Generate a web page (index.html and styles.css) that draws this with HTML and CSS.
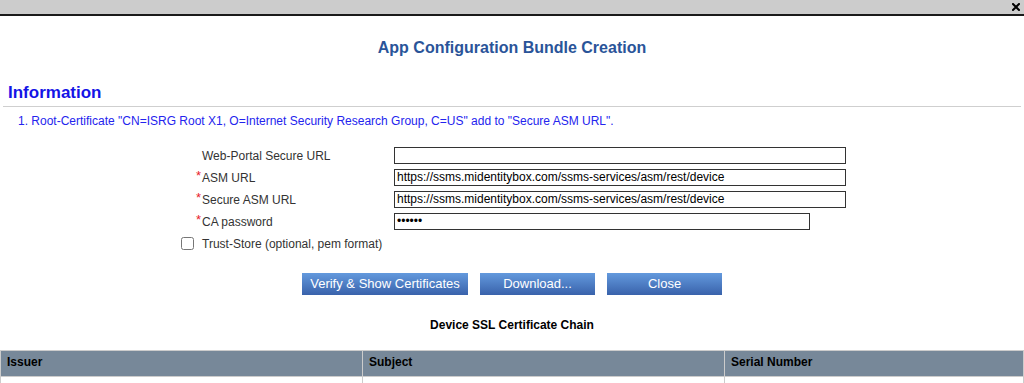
FILE: index.html
```html
<!DOCTYPE html>
<html lang="en">
<head>
  <meta charset="UTF-8">
  <meta name="viewport" content="width=device-width, initial-scale=1.0">
  <title>App Configuration Bundle Creation</title>
  <link rel="stylesheet" href="styles.css">
</head>
<body>
  <div class="titlebar">
    <a href="#" class="close" title="Close">
      <svg width="8" height="8" viewBox="0 0 8 8"><path d="M1 1 L7 7 M7 1 L1 7" stroke="#000" stroke-width="2" stroke-linecap="square"/></svg>
    </a>
  </div>

  <h1 class="page-title">App Configuration Bundle Creation</h1>

  <div class="info">
    <h2>Information</h2>
    <p class="info-item">1. Root-Certificate "CN=ISRG Root X1, O=Internet Security Research Group, C=US" add to "Secure ASM URL".</p>
  </div>

  <form class="config-form" onsubmit="return false;">
    <span class="mark"></span>
    <label for="webPortal">Web-Portal Secure URL</label>
    <input type="text" id="webPortal" value="">

    <span class="mark req">*</span>
    <label for="asmUrl">ASM URL</label>
    <input type="text" id="asmUrl" value="https://ssms.midentitybox.com/ssms-services/asm/rest/device">

    <span class="mark req">*</span>
    <label for="secureAsmUrl">Secure ASM URL</label>
    <input type="text" id="secureAsmUrl" value="https://ssms.midentitybox.com/ssms-services/asm/rest/device">

    <span class="mark req">*</span>
    <label for="caPassword">CA password</label>
    <input type="password" id="caPassword" class="short" value="secret">

    <span class="mark"><input type="checkbox" id="trustStore"></span>
    <label for="trustStore" class="wide">Trust-Store (optional, pem format)</label>
  </form>

  <div class="buttons">
    <button class="btn btn-verify">Verify &amp; Show Certificates</button>
    <button class="btn">Download...</button>
    <button class="btn">Close</button>
  </div>

  <h3 class="chain-title">Device SSL Certificate Chain</h3>

  <table class="chain">
    <colgroup>
      <col style="width: 362px">
      <col style="width: 362px">
      <col>
    </colgroup>
    <thead>
      <tr>
        <th>Issuer</th>
        <th>Subject</th>
        <th>Serial Number</th>
      </tr>
    </thead>
    <tbody>
      <tr>
        <td></td>
        <td></td>
        <td></td>
      </tr>
    </tbody>
  </table>
</body>
</html>
```

FILE: styles.css
```css
body {
  font-family: "Liberation Sans", Arial, sans-serif;
  font-size: 12px;
  margin: 0;
  padding: 0;
  background-color: white;
  color: #333;
}
.titlebar {
  height: 14px;
  background-color: #cccccc;
  border-bottom: 2px solid #1a1a1a;
  display: flex;
  justify-content: flex-end;
  align-items: center;
}
.titlebar .close {
  display: flex;
  margin-right: 4px;
}
.page-title {
  margin: 22px 0 0;
  font-size: 16px;
  line-height: 20px;
  text-align: center;
  color: #2a5499;
}
.info {
  margin: 25px 3px 0;
}
.info h2 {
  margin: 0;
  padding: 0 0 3px 5px;
  font-size: 17px;
  line-height: 20px;
  color: #1414e6;
  border-bottom: 1px solid #cfcfcf;
}
.info-item {
  margin: 7px 0 0 15px;
  line-height: 14px;
  color: #2424ee;
}
/* Form laid out as marker / label / input columns */
.config-form {
  display: grid;
  grid-template-columns: 20px 192px 452px;
  grid-auto-rows: 22px;
  align-items: center;
  margin: 16px 0 0 182px;
}
.config-form label {
  padding-top: 2px;
  color: #333;
}
.config-form label.wide {
  grid-column: span 2;
}
.mark {
  display: flex;
  justify-content: flex-end;
  padding-right: 1px;
}
.mark.req {
  align-self: start;
  margin-top: 4px;
  color: #e8202a;
  font-size: 13px;
  line-height: 12px;
}
.mark input[type="checkbox"] {
  margin: 0 7px 0 0;
  width: 13px;
  height: 13px;
}
.config-form input[type="text"],
.config-form input[type="password"] {
  box-sizing: border-box;
  width: 452px;
  height: 17px;
  margin: 0;
  padding: 0 2px;
  border: 1px solid #333;
  font-family: "Liberation Sans", Arial, sans-serif;
  font-size: 12px;
  color: #000;
  outline: none;
}
.config-form input.short {
  width: 416px;
}
.buttons {
  display: flex;
  justify-content: center;
  gap: 12px;
  margin-top: 19px;
}
.btn {
  width: 115px;
  height: 22px;
  padding: 0 0 2px;
  border: none;
  background: linear-gradient(to bottom, #6399dd, #3962ab);
  color: white;
  font-family: "Liberation Sans", Arial, sans-serif;
  font-size: 13px;
  cursor: pointer;
}
.btn-verify {
  width: 166px;
}
.chain-title {
  margin: 23px 0 0;
  font-size: 12px;
  line-height: 14px;
  text-align: center;
  color: #000;
}
.chain {
  width: 100%;
  margin-top: 18px;
  border-collapse: collapse;
  table-layout: fixed;
}
.chain th,
.chain td {
  border: 1px solid #cccccc;
  padding: 0 6px;
  text-align: left;
}
.chain th {
  height: 22px;
  padding-bottom: 3px;
  background-color: #778899;
  color: #000;
  font-size: 12px;
  font-weight: bold;
}
.chain td {
  height: 20px;
}
```
